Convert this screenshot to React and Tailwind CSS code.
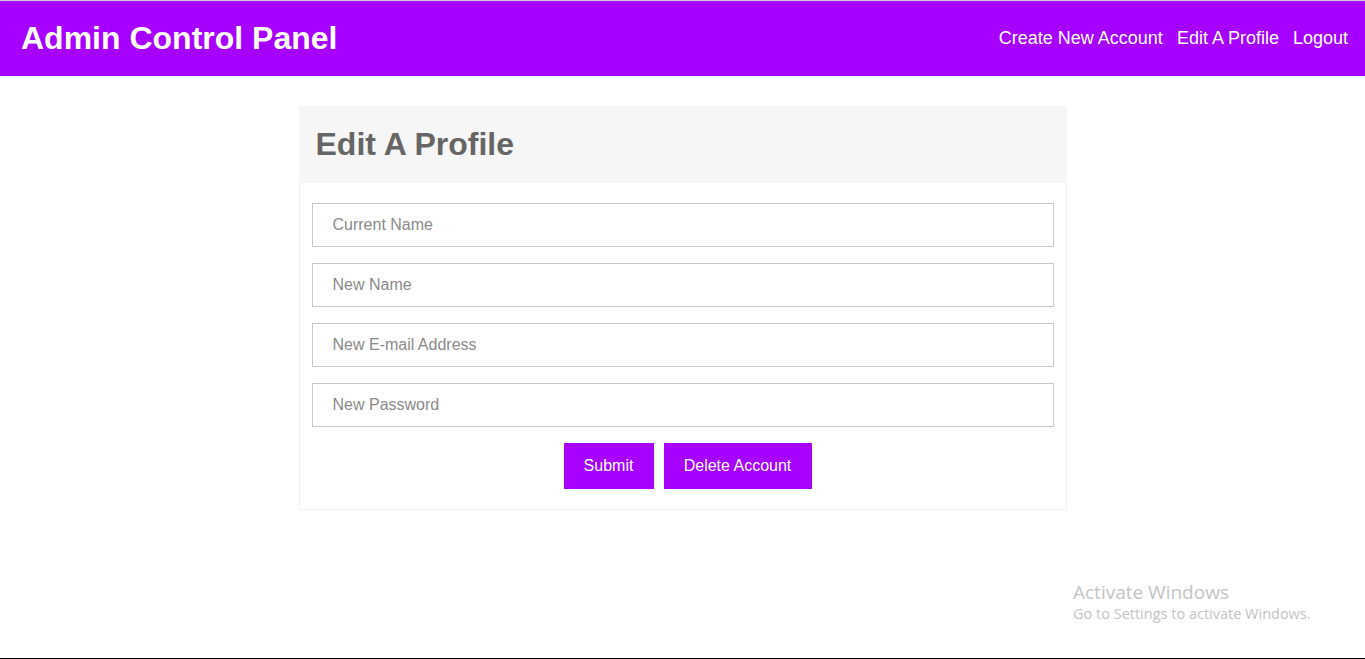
import { useState } from 'react'

const FIELDS = [
  { key: 'current', placeholder: 'Current Name', type: 'text' },
  { key: 'name', placeholder: 'New Name', type: 'text' },
  { key: 'email', placeholder: 'New E-mail Address', type: 'email' },
  { key: 'password', placeholder: 'New Password', type: 'password' },
]

const NAV = ['Create New Account', 'Edit A Profile', 'Logout']

export default function App() {
  const [form, setForm] = useState({})

  return (
    <div
      className="relative h-[659px] flex flex-col bg-white border-t border-[#d0d0d0] border-b border-b-black overflow-hidden"
      style={{ fontFamily: '"Liberation Sans", Arial, sans-serif' }}
    >
      {/* Top bar */}
      <header className="h-[75px] shrink-0 bg-[#a600ff] flex items-center justify-between pl-[21px] pr-[17px] pb-[2px]">
        <h1 className="text-[32px] font-bold text-white leading-none">Admin Control Panel</h1>
        <nav className="flex items-center gap-[14px] text-[18px] text-white">
          {NAV.map((n) => (
            <a key={n} href="#" className="leading-none">
              {n}
            </a>
          ))}
        </nav>
      </header>

      {/* Edit card */}
      <main className="flex justify-center pt-[30px]">
        <section className="w-[768px]">
          <div className="h-[77px] bg-[#f6f6f6] flex items-center px-[17px] pb-[2px]">
            <h2 className="text-[32px] font-bold text-[#666666] leading-none">Edit A Profile</h2>
          </div>
          <form
            className="border border-t-0 border-[#f1f1f1] px-3 pt-5 pb-5 flex flex-col gap-4"
            onSubmit={(e) => e.preventDefault()}
          >
            {FIELDS.map((f) => (
              <input
                key={f.key}
                type={f.type}
                placeholder={f.placeholder}
                value={form[f.key] || ''}
                onChange={(e) => setForm({ ...form, [f.key]: e.target.value })}
                className="h-11 w-full border border-[#c8c8c8] px-5 text-[16px] text-[#333] placeholder:text-[#8a8a8a] outline-none"
              />
            ))}
            <div className="flex justify-center gap-[10px] pl-[10px]">
              <button type="submit" className="h-[46px] w-[90px] bg-[#a600ff] text-white text-[16px]">
                Submit
              </button>
              <button type="button" className="h-[46px] w-[148px] bg-[#a600ff] text-white text-[16px]">
                Delete Account
              </button>
            </div>
          </form>
        </section>
      </main>

      {/* Windows activation watermark */}
      <div
        className="absolute left-[1073px] top-[579px] text-[#c4c4c4] pointer-events-none"
        style={{ fontFamily: '"Open Sans", "Noto Sans", sans-serif' }}
      >
        <div className="text-[19px] leading-[24px]">Activate Windows</div>
        <div className="text-[14.5px] leading-[20px]">Go to Settings to activate Windows.</div>
      </div>
    </div>
  )
}
